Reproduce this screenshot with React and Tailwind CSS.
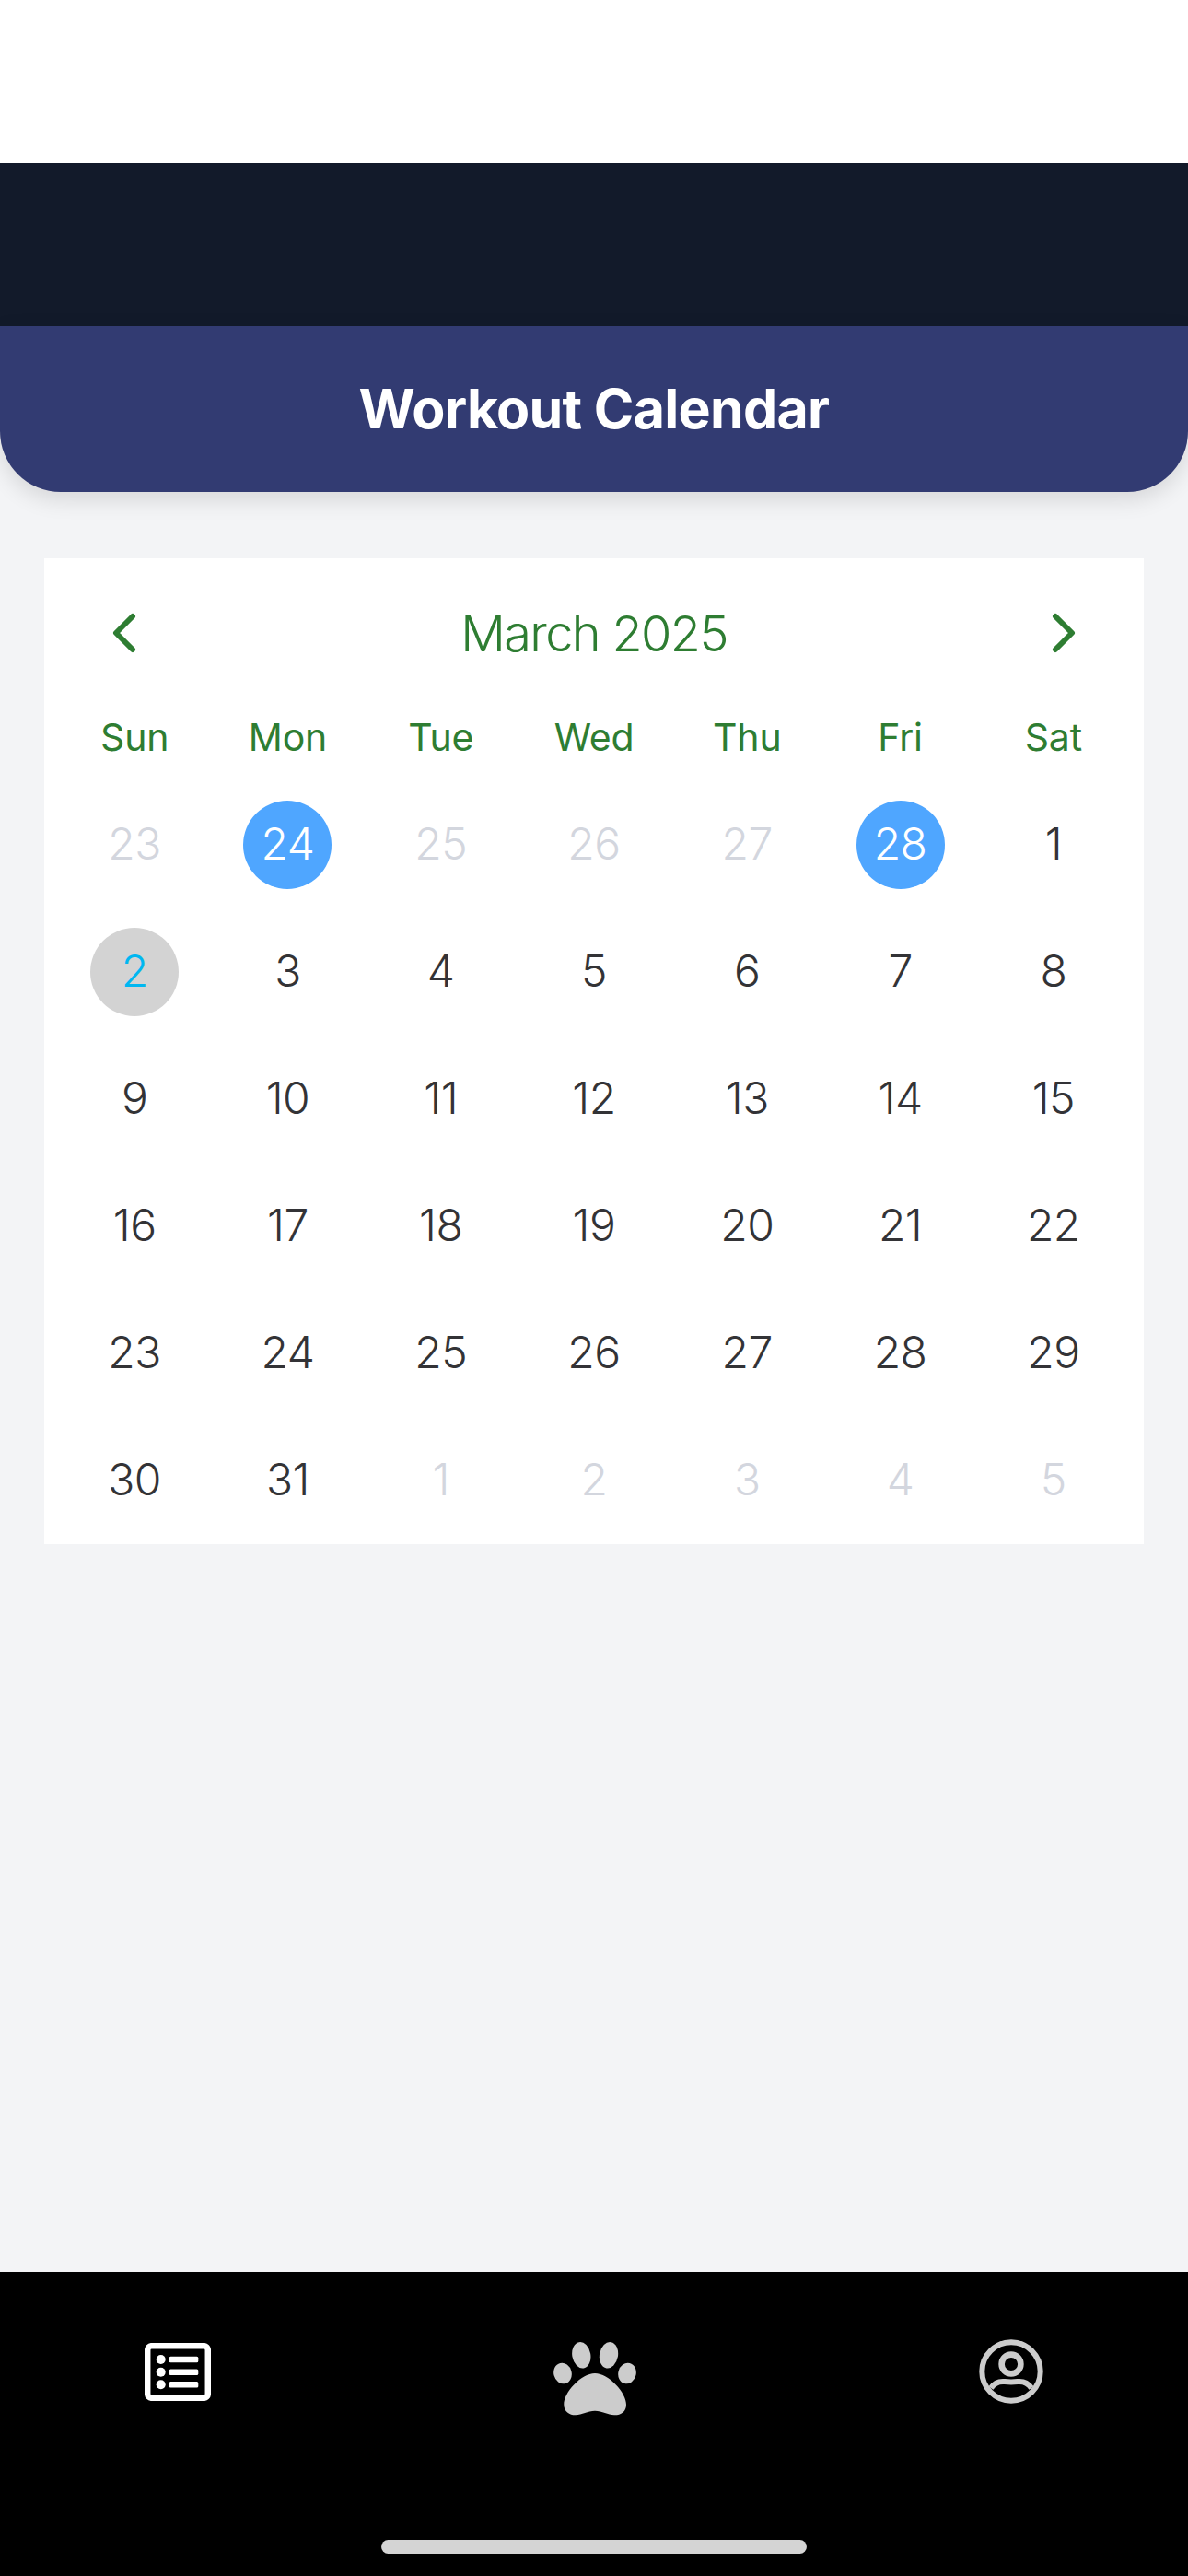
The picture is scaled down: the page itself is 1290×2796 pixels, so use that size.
import React from 'react';

const WEEKDAYS = ['Sun', 'Mon', 'Tue', 'Wed', 'Thu', 'Fri', 'Sat'];

const DAYS = [
  { label: 23, muted: true },
  { label: 24, marked: true },
  { label: 25, muted: true },
  { label: 26, muted: true },
  { label: 27, muted: true },
  { label: 28, marked: true },
  { label: 1 },
  { label: 2, today: true },
  ...Array.from({ length: 29 }, (_, i) => ({ label: i + 3 })),
  ...[1, 2, 3, 4, 5].map((label) => ({ label, muted: true })),
];

function dayClass(day) {
  if (day.marked) return 'bg-[#4fa6ff] text-white';
  if (day.today) return 'bg-[#d3d3d3] text-[#00b7f1]';
  if (day.muted) return 'text-[#d3d6de]';
  return 'text-[#333336]';
}

function Chevron({ flip }) {
  return (
    <svg width="26" height="44" viewBox="0 0 26 44" fill="none">
      <path
        d={flip ? 'M4 4 L22 22 L4 40' : 'M22 4 L4 22 L22 40'}
        stroke="#2e7d32"
        strokeWidth="6"
        strokeLinecap="round"
        strokeLinejoin="round"
      />
    </svg>
  );
}

function ListIcon() {
  return (
    <svg width="72" height="63" viewBox="0 0 72 63" fill="none">
      <rect x="3.2" y="3.2" width="65.6" height="56.6" rx="4.5" stroke="#fff" strokeWidth="6.5" />
      <circle cx="17.7" cy="18" r="5" fill="#fff" />
      <circle cx="17.7" cy="31.7" r="5" fill="#fff" />
      <circle cx="17.7" cy="45.3" r="5" fill="#fff" />
      <rect x="26.7" y="14.7" width="31.6" height="6.6" rx="1.6" fill="#fff" />
      <rect x="26.7" y="28.4" width="31.6" height="6.6" rx="1.6" fill="#fff" />
      <rect x="26.7" y="42" width="31.6" height="6.6" rx="1.6" fill="#fff" />
    </svg>
  );
}

function PawIcon() {
  return (
    <svg width="90" height="80" viewBox="0 0 90 80" fill="#cccccc">
      <ellipse cx="30.3" cy="14.3" rx="10" ry="14.3" transform="rotate(-10 30.3 14.3)" />
      <ellipse cx="60" cy="14.3" rx="10" ry="14.3" transform="rotate(10 60 14.3)" />
      <ellipse cx="10" cy="34" rx="9.7" ry="11.4" transform="rotate(-14 10 34)" />
      <ellipse cx="80" cy="34" rx="9.7" ry="11.4" transform="rotate(14 80 34)" />
      <path d="M45 34 C30 34 11 55 11.3 68 C11.3 76 18 79.5 24 79.3 C31 79 37 74.7 45 74.7 C53 74.7 59 79 66 79.3 C73 79.5 79 76 79 68 C79 55 60 34 45 34Z" />
    </svg>
  );
}

function ProfileIcon() {
  return (
    <svg width="76" height="76" viewBox="-38 -38 76 76" fill="none" stroke="#cccccc" strokeWidth="6">
      <circle cx="0" cy="0" r="31.7" />
      <circle cx="0" cy="-8" r="10.4" strokeWidth="6.6" />
      <path d="M-22 18 C-18 12 -12 10.5 -7 11 C-3 11.5 3 11.5 7 11 C12 10.5 18 12 22 18" />
    </svg>
  );
}

export default function App() {
  return (
    <div className="flex h-[2796px] w-full flex-col bg-[#f3f4f6] font-['Inter',sans-serif]">
      <div className="h-[177px] bg-white" />
      <div className="h-[177px] bg-[#121a2a]" />
      <header className="relative z-10 flex h-[180px] items-center justify-center rounded-b-[66px] bg-[#323b72] shadow-[0_8px_24px_rgba(0,0,0,0.12)]">
        <h1 className="text-[59px] font-bold tracking-[-0.7px] text-white">Workout Calendar</h1>
      </header>

      <main className="flex-1 px-[48px] pt-[72px]">
        <section className="bg-white px-[15px]">
          <div className="flex h-[162px] items-center justify-between px-[59px]">
            <Chevron />
            <span className="text-[54px] font-light tracking-[-1.6px] text-[#2e7d32]">March 2025</span>
            <Chevron flip />
          </div>
          <div className="grid h-[80px] grid-cols-7 items-center pb-[14px]">
            {WEEKDAYS.map((name) => (
              <span key={name} className="text-center text-[41px] tracking-[-0.2px] text-[#2e7d32]">{name}</span>
            ))}
          </div>
          <div className="grid grid-cols-7">
            {DAYS.map((day, i) => (
              <div key={i} className="flex h-[138px] items-center justify-center">
                <span className={`flex h-[96px] w-[96px] items-center justify-center rounded-full pb-[2px] text-[48px] font-light tracking-[-0.5px] ${dayClass(day)}`}>
                  {day.label}
                </span>
              </div>
            ))}
          </div>
        </section>
      </main>

      <nav className="flex h-[330px] flex-col items-center bg-black">
        <div className="flex h-[291px] w-full items-start justify-between pl-[148px] pr-[147px] pt-[70px]">
          <div className="flex h-[76px] w-[90px] items-center justify-center"><ListIcon /></div>
          <div className="mt-[8px] flex h-[76px] w-[90px] items-center justify-center"><PawIcon /></div>
          <div className="flex h-[76px] w-[90px] items-center justify-center"><ProfileIcon /></div>
        </div>
        <div className="h-[15px] w-[462px] rounded-full bg-[#d4d4d4]" />
      </nav>
    </div>
  );
}
